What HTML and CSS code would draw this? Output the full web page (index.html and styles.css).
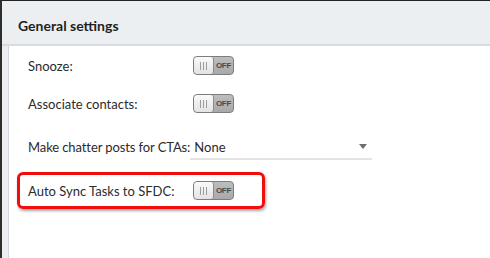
FILE: index.html
```html
<!DOCTYPE html>
<html>

<head lang="en">
    <meta charset="UTF-8">
    <title>General settings</title>
    <link rel="stylesheet" href="styles.css">
</head>

<body>
    <div class="frame">
        <div class="header">
            <h2>General settings</h2>
        </div>
        <div class="panel">
            <div class="row">
                <span class="label">Snooze:</span>
                <span class="toggle"><span class="knob"><i></i><i></i><i></i></span><span class="state">OFF</span></span>
            </div>
            <div class="row">
                <span class="label">Associate contacts:</span>
                <span class="toggle"><span class="knob"><i></i><i></i><i></i></span><span class="state">OFF</span></span>
            </div>
            <div class="row select-row">
                <span class="label">Make chatter posts for CTAs:</span>
                <span class="select"><span class="value">None</span><span class="caret"></span></span>
            </div>
            <div class="row highlight">
                <span class="label">Auto Sync Tasks to SFDC:</span>
                <span class="toggle"><span class="knob"><i></i><i></i><i></i></span><span class="state">OFF</span></span>
            </div>
        </div>
    </div>
</body>

</html>
```

FILE: styles.css
```css
html,
body {
    margin: 0;
    height: 100%;
}

body {
    font-family: "Lato", "Open Sans", sans-serif;
    color: #2b2b2b;
    overflow: hidden;
}

.frame {
    height: 257px;
    border-top: 1px solid #222;
    border-left: 2px solid #2e2e2e;
    background-color: #eceff2;
    display: flex;
    flex-direction: column;
}

.header {
    height: 38px;
    flex: none;
    display: flex;
    align-items: center;
    padding-left: 16px;
    padding-top: 5px;
    border-bottom: 2px solid #d9dcdf;
}

.header h2 {
    margin: 0;
    font-size: 14px;
    font-weight: bold;
    color: #1f1f1f;
}

.panel {
    flex: 1;
    margin-left: 6px;
    background-color: #fff;
    border-left: 1px solid #d3d7db;
    padding-top: 10px;
}

.row {
    display: flex;
    align-items: center;
    height: 19px;
    padding-left: 19px;
    margin-bottom: 19px;
    font-size: 13px;
}

.label {
    width: 165px;
    flex: none;
    white-space: nowrap;
}

.toggle {
    display: flex;
    width: 39px;
    height: 17px;
    border: 1px solid #7d7d7d;
    border-radius: 4px;
    background: linear-gradient(#bdbdbd, #a9a9a9);
    overflow: hidden;
}

.knob {
    width: 19px;
    height: 17px;
    background: linear-gradient(#fafafa, #e3e3e3);
    border-right: 1px solid #8a8a8a;
    border-radius: 3px;
    display: flex;
    justify-content: center;
    align-items: center;
    gap: 2px;
}

.knob i {
    width: 1px;
    height: 8px;
    background-color: #9c9c9c;
}

.state {
    flex: 1;
    font-family: "Liberation Sans", sans-serif;
    font-size: 8px;
    font-weight: bold;
    color: #4a4a4a;
    display: flex;
    align-items: center;
    justify-content: center;
    letter-spacing: -0.3px;
}

.select-row {
    height: 25px;
    margin-top: 21px;
    margin-bottom: 13px;
}

.select-row .label {
    width: auto;
    letter-spacing: -0.1px;
}

.select {
    width: 182px;
    height: 25px;
    margin-top: 2px;
    padding-left: 4px;
    border-bottom: 2px solid #e3e3e3;
    display: flex;
    align-items: center;
    justify-content: space-between;
    box-sizing: border-box;
}

.caret {
    width: 0;
    height: 0;
    border-left: 4px solid transparent;
    border-right: 4px solid transparent;
    border-top: 5px solid #6e6e6e;
    margin-right: 5px;
}

.highlight {
    width: 234px;
    height: 31px;
    margin-left: 8px;
    padding-left: 8px;
    border: 3px solid #f20d0d;
    border-radius: 6px;
    box-shadow: 1px 2px 3px rgba(0, 0, 0, 0.35);
}

.highlight .label {
    width: 165px;
}
```
